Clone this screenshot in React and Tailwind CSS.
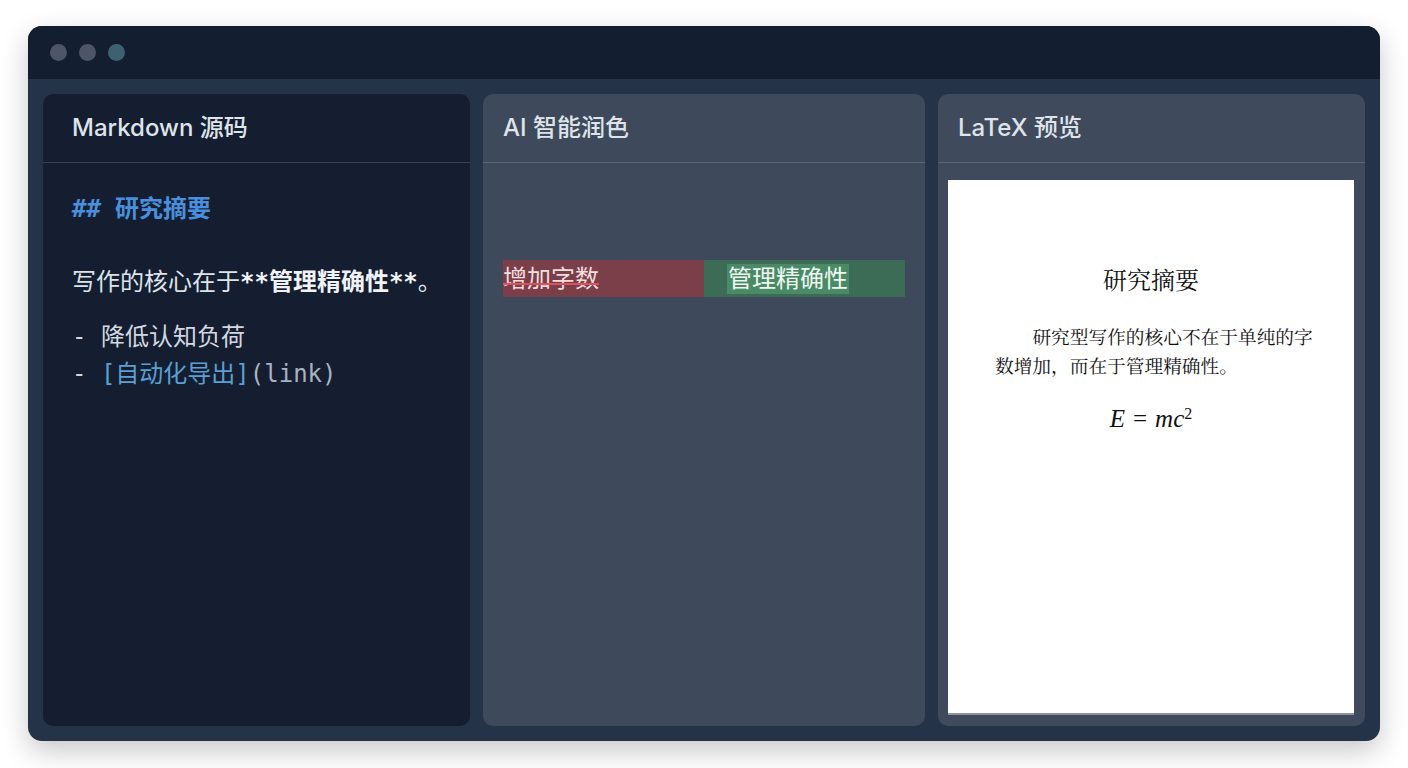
import React from "react";

const sans = { fontFamily: 'Inter, "Noto Sans CJK SC", sans-serif' };
const mono = { fontFamily: '"DejaVu Sans Mono", "Noto Sans CJK SC", monospace' };
const serif = { fontFamily: '"Liberation Serif", "Noto Serif CJK SC", "Noto Sans CJK SC", serif' };

export default function App() {
  return (
    <div className="w-[1408px] h-[768px] bg-white pt-[26px] pl-[28px]" style={sans}>
      <div className="w-[1352px] h-[715px] rounded-[14px] overflow-hidden bg-[#243347] shadow-[0_10px_28px_rgba(0,0,0,0.22)] flex flex-col">
        <div className="h-[53px] bg-[#141e31] flex items-center pl-[22px] gap-[12px] shrink-0">
          <div className="w-[17px] h-[17px] rounded-full bg-[#4d5567]" />
          <div className="w-[17px] h-[17px] rounded-full bg-[#4d5567]" />
          <div className="w-[17px] h-[17px] rounded-full bg-[#3c6272]" />
        </div>
        <div className="flex-1 flex gap-[13px] p-[15px]">
          {/* Markdown */}
          <div className="w-[427px] rounded-[10px] bg-[#141e30] flex flex-col overflow-hidden">
            <div className="h-[69px] border-b border-[#354356] flex items-center pl-[29px] text-[24px] font-medium text-[#dfe3ea]">
              Markdown 源码
            </div>
            <div className="pl-[29px] pt-[27px] text-[24px]">
              <div className="h-[37px] leading-[37px] font-bold text-[#4a8fdc]">
                <span className="italic" style={mono}>##</span>
                <span className="ml-[14px]">研究摘要</span>
              </div>
              <div className="mt-[36px] h-[37px] leading-[37px] text-[#dfe3ea]">
                写作的核心在于
                <span className="font-semibold text-[#f0f2f5]">
                  <span style={mono}>**</span>管理精确性<span style={mono}>**</span>
                </span>
                。
              </div>
              <div className="mt-[19px] leading-[37px] text-[#d3d8e0]" style={mono}>
                <div>- 降低认知负荷</div>
                <div>
                  - <span className="text-[#5b9fd3]">[自动化导出]</span>
                  <span className="text-[#a9b3c0]">(link)</span>
                </div>
              </div>
            </div>
          </div>
          {/* AI */}
          <div className="w-[442px] rounded-[10px] bg-[#3e4a5b] flex flex-col overflow-hidden">
            <div className="h-[69px] border-b border-[#566779] flex items-center pl-[20px] text-[24px] font-medium text-[#dfe3ea]">
              AI 智能润色
            </div>
            <div className="px-[20px] pt-[97px]">
              <div className="flex h-[37px] text-[24px] leading-[37px]">
                <div className="w-[201px] shrink-0 bg-[#7b3f4a] text-[#f3dede]">
                  <span className="relative">
                    增加字数
                    <span className="absolute left-0 right-0 top-[19px] h-[2px] bg-[#e0505a]" />
                  </span>
                </div>
                <div className="w-[201px] shrink-0 bg-[#3c6b56] pl-[23px] flex items-center">
                  <span className="bg-[#4a8a67] text-[#eef7f0] h-[30px] leading-[30px] px-[1px]">管理精确性</span>
                </div>
              </div>
            </div>
          </div>
          {/* LaTeX */}
          <div className="w-[427px] rounded-[10px] bg-[#3f4b5c] flex flex-col overflow-hidden">
            <div className="h-[69px] border-b border-[#566779] flex items-center pl-[20px] text-[24px] font-medium text-[#dfe3ea]">
              LaTeX 预览
            </div>
            <div className="flex-1 pt-[17px] pl-[10px] pr-[11px] pb-[11px]">
              <div className="h-full bg-white border-b-2 border-[#8a94a3] pt-[83px]">
                <div className="text-center text-[24px] leading-[36px] text-[#111]" style={serif}>研究摘要</div>
                <div className="mt-[24px] w-[318px] ml-[47px] text-[18.7px] leading-[29px] text-[#111] indent-[2em]" style={serif}>
                  研究型写作的核心不在于单纯的字数增加，而在于管理精确性。
                </div>
                <div className="mt-[19px] text-center text-[25px] text-[#111]" style={serif}>
                  <span className="italic">E</span>
                  <span className="mx-[8px]">=</span>
                  <span className="italic">mc</span>
                  <sup className="text-[16px]">2</sup>
                </div>
              </div>
            </div>
          </div>
        </div>
      </div>
    </div>
  );
}
